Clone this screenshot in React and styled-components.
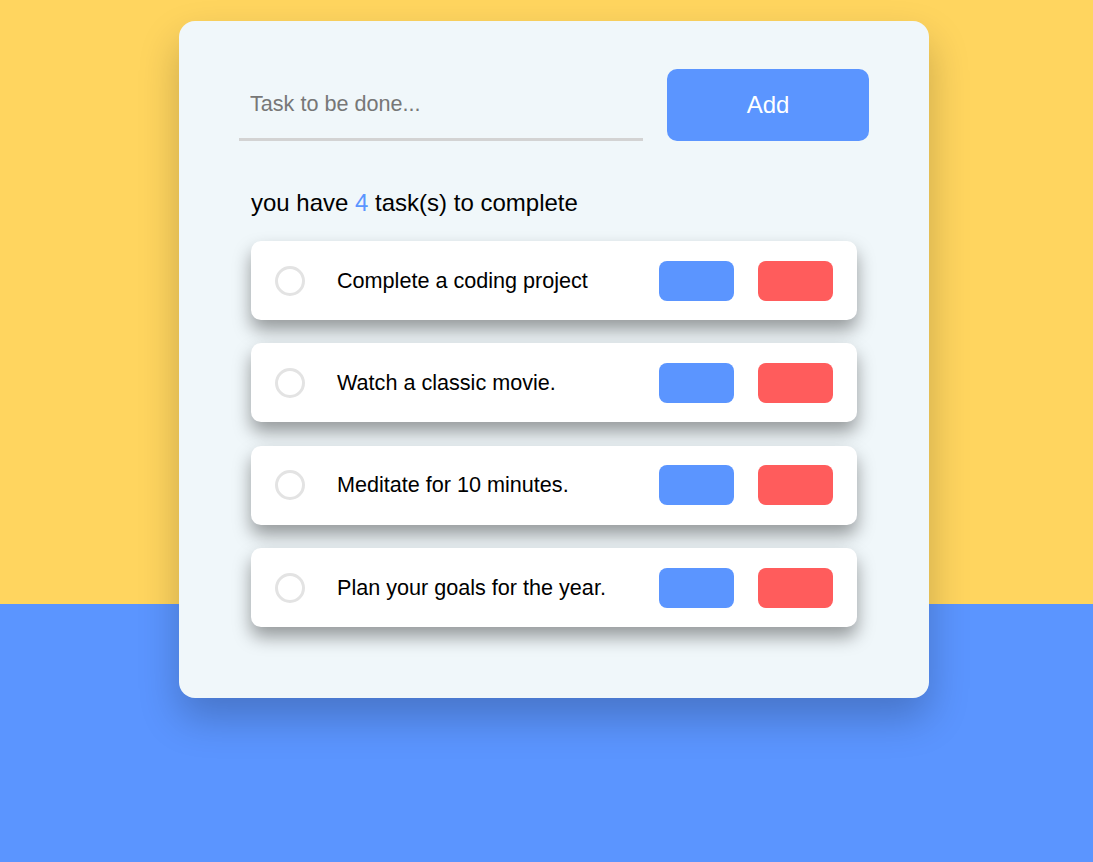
import styled, { createGlobalStyle } from 'styled-components';

const GlobalStyle = createGlobalStyle`
	html, body {
		margin: 0;
		padding: 0;
	}
	body {
		min-height: 862px;
		font-family: "Liberation Sans", Arial, sans-serif;
		background: linear-gradient(to bottom, #ffd55f 0, #ffd55f 604px, #5b95ff 604px, #5b95ff 100%);
	}
`;

const Page = styled.div`
	display: flex;
	justify-content: center;
	padding: 21px 0 0 15px;
`;

const Card = styled.div`
	width: 750px;
	box-sizing: border-box;
	padding: 48px 60px 71px;
	background: #f0f7fa;
	border-radius: 16px;
	box-shadow: 0 20px 40px rgba(0, 0, 0, 0.22);
`;

const Form = styled.div`
	display: flex;
	gap: 24px;
`;

const Input = styled.input`
	width: 404px;
	height: 72px;
	box-sizing: border-box;
	border: none;
	border-bottom: 3px solid #d3d3d3;
	background: transparent;
	padding: 0 11px 0;
	font-family: inherit;
	font-size: 21.6px;
	color: #333;
	outline: none;
	&::placeholder {
		color: #777;
	}
`;

const AddButton = styled.button`
	width: 202px;
	height: 72px;
	border: none;
	border-radius: 10px;
	background: #5b95ff;
	color: #fff;
	font-family: inherit;
	font-size: 24px;
`;

const Count = styled.p`
	margin: 48px 12px 24px;
	font-size: 24px;
	line-height: 28px;
	color: #000;
`;

const Num = styled.span`
	color: #5b95ff;
`;

const List = styled.ul`
	list-style: none;
	margin: 0 12px;
	padding: 0;
	display: flex;
	flex-direction: column;
	gap: 23.4px;
`;

const Item = styled.li`
	height: 79px;
	display: flex;
	align-items: center;
	padding: 0 24px;
	background: #fff;
	border-radius: 10px;
	box-shadow: 0 10px 18px rgba(0, 0, 0, 0.38);
`;

const Check = styled.span`
	width: 24px;
	height: 24px;
	border: 3px solid #e3e3e3;
	border-radius: 50%;
	flex-shrink: 0;
`;

const Text = styled.span`
	flex: 1;
	margin-left: 32px;
	font-size: 21.6px;
	color: #000;
`;

const Action = styled.button`
	width: 75px;
	height: 40px;
	border: none;
	border-radius: 8px;
	margin-left: 24px;
	background: ${props => props.color};
`;

const tasks = [
	'Complete a coding project',
	'Watch a classic movie.',
	'Meditate for 10 minutes.',
	'Plan your goals for the year.',
];

export default function App() {
	return (
		<>
			<GlobalStyle />
			<Page>
				<Card>
					<Form>
						<Input placeholder="Task to be done..." />
						<AddButton>Add</AddButton>
					</Form>
					<Count>
						you have <Num>{tasks.length}</Num> task(s) to complete
					</Count>
					<List>
						{tasks.map((t) => (
							<Item key={t}>
								<Check />
								<Text>{t}</Text>
								<Action color="#5b95ff" />
								<Action color="#ff5c5c" />
							</Item>
						))}
					</List>
				</Card>
			</Page>
		</>
	);
}
